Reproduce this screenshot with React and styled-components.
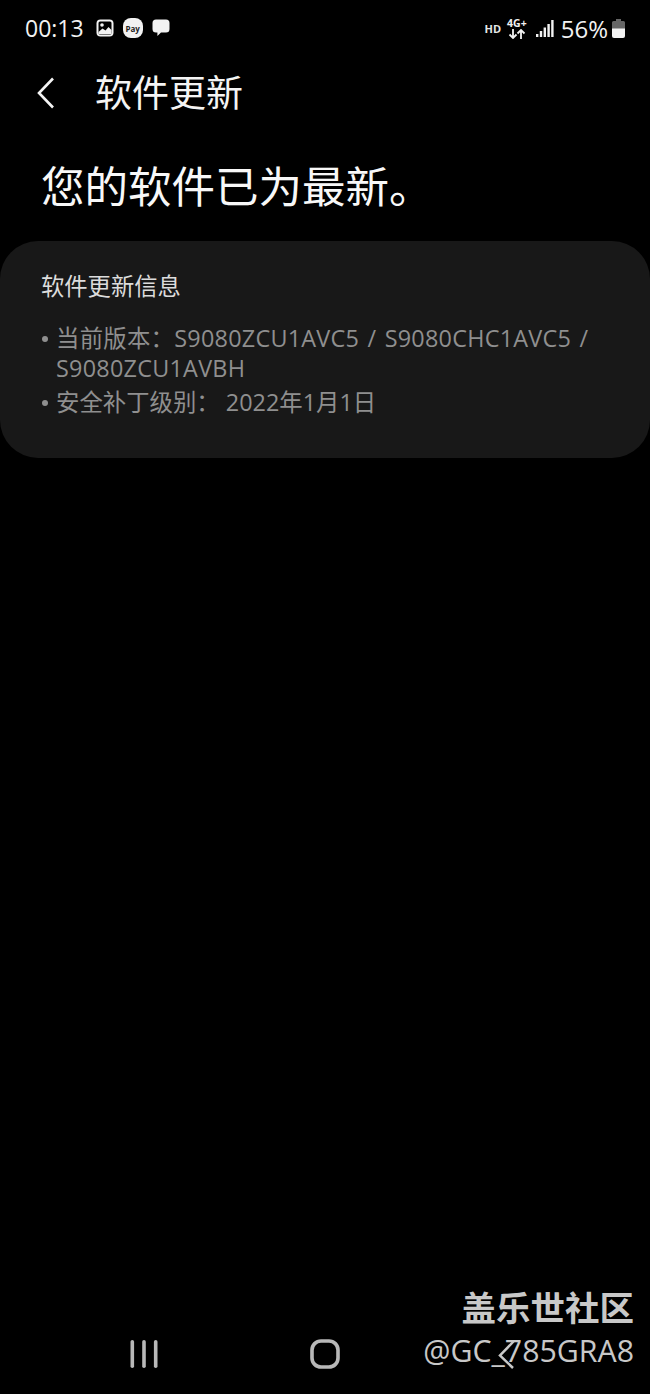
import styled, { createGlobalStyle } from "styled-components";

const latin = `"Open Sans", "Noto Sans CJK SC", sans-serif`;

export default function App() {
  return (
    <>
      <GlobalStyle />
      <Page>
        <StatusBar>
          <StatusGroup>
            <Clock>00:13</Clock>
            <GalleryIcon />
            <PayBadge>Pay</PayBadge>
            <ChatIcon />
          </StatusGroup>
          <StatusGroup>
            <HdLabel>HD</HdLabel>
            <NetworkType>
              <span>4G+</span>
              <DataArrows />
            </NetworkType>
            <SignalIcon />
            <Battery>56%</Battery>
            <BatteryIcon />
          </StatusGroup>
        </StatusBar>

        <AppBar>
          <BackIcon />
          <AppTitle>软件更新</AppTitle>
        </AppBar>

        <Heading>您的软件已为最新。</Heading>

        <InfoCard>
          <CardTitle>软件更新信息</CardTitle>
          <InfoList>
            <InfoItem $wordGap={2} $track={0.25}>当前版本：S9080ZCU1AVC5 / S9080CHC1AVC5 / S9080ZCU1AVBH</InfoItem>
            <InfoItem>安全补丁级别：&nbsp;2022年1月1日</InfoItem>
          </InfoList>
        </InfoCard>

        <NavBar>
          <RecentsIcon />
          <HomeIcon />
        </NavBar>

        <Watermark>
          <WatermarkName>盖乐世社区</WatermarkName>
          <WatermarkUser>@GC_785GRA8</WatermarkUser>
          <NavBackIcon />
        </Watermark>
      </Page>
    </>
  );
}

function GalleryIcon() {
  return (
    <svg width="18" height="18" viewBox="0 0 18 18">
      <rect x="0.5" y="0.5" width="17" height="17" rx="4" fill="#f2f2f2" />
      <rect x="2.5" y="2.5" width="13" height="13" rx="1.5" fill="#000" />
      <circle cx="6" cy="6" r="1.8" fill="#f2f2f2" />
      <path d="M2.5 13l4-3.5 3 2 3-3.5 3 3v4h-13z" fill="#f2f2f2" />
    </svg>
  );
}

function ChatIcon() {
  return (
    <svg width="18" height="18" viewBox="0 0 18 18">
      <path
        d="M4 0.5h10a3.5 3.5 0 0 1 3.5 3.5v6a3.5 3.5 0 0 1-3.5 3.5h-5l-3.6 3.6v-3.6h-1.4a3.5 3.5 0 0 1-3.5-3.5v-6a3.5 3.5 0 0 1 3.5-3.5z"
        fill="#f2f2f2"
      />
    </svg>
  );
}

function DataArrows() {
  return (
    <svg width="18" height="10" viewBox="0 0 18 10">
      <path d="M5 0v9M1.5 5.5L5 9l3.5-3.5" stroke="#f2f2f2" strokeWidth="1.8" fill="none" />
      <path d="M13 10V1M9.5 4.5L13 1l3.5 3.5" stroke="#f2f2f2" strokeWidth="1.8" fill="none" />
    </svg>
  );
}

function SignalIcon() {
  return (
    <svg width="18" height="17" viewBox="0 0 18 17">
      <rect x="0" y="14" width="2.4" height="3" fill="#f2f2f2" />
      <rect x="3.8" y="11" width="2.4" height="6" fill="#f2f2f2" />
      <rect x="7.6" y="7.5" width="2.4" height="9.5" fill="#f2f2f2" />
      <rect x="11.4" y="4" width="2.4" height="13" fill="#f2f2f2" />
      <rect x="15.2" y="0" width="2.4" height="17" fill="#f2f2f2" />
    </svg>
  );
}

function BatteryIcon() {
  return (
    <svg width="13" height="19" viewBox="0 0 13 19">
      <path d="M4 0h5v2h2.5a1.5 1.5 0 0 1 1.5 1.5V10H0V3.5A1.5 1.5 0 0 1 1.5 2H4z" fill="#666" />
      <path d="M0 9.5h13v7.5a2 2 0 0 1-2 2H2a2 2 0 0 1-2-2z" fill="#f2f2f2" />
    </svg>
  );
}

function BackIcon() {
  return (
    <svg width="18" height="32" viewBox="0 0 18 32">
      <path d="M16 1.5L2 16l14 14.5" stroke="#f4f4f4" strokeWidth="2.6" fill="none" />
    </svg>
  );
}

function RecentsIcon() {
  return (
    <svg width="28" height="28" viewBox="0 0 28 28">
      <rect x="0.5" y="0" width="3.6" height="28" rx="1.8" fill="#b8b8b8" />
      <rect x="12.2" y="0" width="3.6" height="28" rx="1.8" fill="#b8b8b8" />
      <rect x="23.9" y="0" width="3.6" height="28" rx="1.8" fill="#b8b8b8" />
    </svg>
  );
}

function HomeIcon() {
  return (
    <svg width="30" height="30" viewBox="0 0 30 30">
      <rect x="2" y="2" width="26" height="26" rx="9" stroke="#b8b8b8" strokeWidth="3.6" fill="none" />
    </svg>
  );
}

function NavBackIcon() {
  return (
    <NavBackSvg width="18" height="30" viewBox="0 0 18 30">
      <path d="M16 1L2 15.5 15 28" stroke="#c8c8c8" strokeWidth="2.5" fill="none" />
    </NavBackSvg>
  );
}

const GlobalStyle = createGlobalStyle`
  * {
    margin: 0;
    padding: 0;
    box-sizing: border-box;
  }

  html, body {
    background-color: #000;
  }

  ul {
    list-style: none;
  }
`;

const Page = styled.div`
  position: relative;
  width: 650px;
  height: 1394px;
  display: flex;
  flex-direction: column;
  background-color: #000;
  font-family: ${latin};
  overflow: hidden;
`;

const StatusBar = styled.div`
  height: 56px;
  padding: 0 25px;
  display: flex;
  align-items: center;
  justify-content: space-between;
  color: #f2f2f2;
`;

const StatusGroup = styled.div`
  display: flex;
  align-items: center;
  gap: 9px;
`;

const Clock = styled.span`
  font-size: 23px;
  margin-right: 3px;
`;

const PayBadge = styled.span`
  width: 20px;
  height: 20px;
  border-radius: 8px;
  background: #f2f2f2;
  color: #222;
  font-size: 8px;
  font-weight: 700;
  display: flex;
  align-items: center;
  justify-content: center;
`;

const HdLabel = styled.span`
  font-size: 11px;
  font-weight: 700;
  color: #e6e6e6;
  margin-right: -3px;
`;

const NetworkType = styled.span`
  display: flex;
  flex-direction: column;
  align-items: center;
  font-size: 10.5px;
  font-weight: 700;
  line-height: 11px;
`;

const Battery = styled.span`
  font-size: 24px;
  margin-left: -2px;
  margin-right: -5px;
`;

const AppBar = styled.header`
  height: 74px;
  padding-left: 37px;
  display: flex;
  align-items: center;
  gap: 40px;
`;

const AppTitle = styled.h1`
  font-family: "Noto Sans CJK SC", sans-serif;
  font-size: 37px;
  line-height: 48px;
  margin-top: -4px;
  font-weight: 400;
  color: #f4f4f4;
`;

const Heading = styled.h2`
  padding: 23px 0 0 41px;
  height: 111px;
  font-family: "Noto Sans CJK SC", sans-serif;
  font-size: 43.5px;
  line-height: 64px;
  font-weight: 400;
  color: #f8f8f8;
`;

const InfoCard = styled.section`
  height: 217px;
  padding: 26px 41px 0;
  border-radius: 38px;
  background-color: #181818;
`;

const CardTitle = styled.h3`
  font-family: "Noto Sans CJK SC", sans-serif;
  font-size: 23.3px;
  line-height: 36px;
  font-weight: 400;
  color: #dcdcdc;
`;

const InfoList = styled.ul`
  margin-top: 20px;
  display: flex;
  flex-direction: column;
  gap: 4px;
`;

const InfoItem = styled.li`
  position: relative;
  padding-left: 15px;
  font-size: 23.4px;
  line-height: 30px;
  word-spacing: ${(props) => props.$wordGap || 0}px;
  letter-spacing: ${(props) => props.$track || 0}px;
  color: #8f8f8f;

  &::before {
    content: "";
    position: absolute;
    left: 1px;
    top: 13px;
    width: 6px;
    height: 6px;
    border-radius: 50%;
    background: #8f8f8f;
  }
`;

const NavBar = styled.nav`
  margin-top: auto;
  height: 80px;
  padding-left: 130px;
  display: flex;
  align-items: center;
  gap: 152px;
`;

const Watermark = styled.div`
  position: absolute;
  right: 16px;
  bottom: 20px;
  text-align: right;
  color: #c8c8c8;
`;

const WatermarkName = styled.div`
  font-family: "Noto Sans CJK SC", sans-serif;
  font-size: 34.5px;
  line-height: 46px;
  margin-bottom: -1px;
  font-weight: 700;
`;

const WatermarkUser = styled.div`
  font-size: 30.3px;
  line-height: 46px;
`;

const NavBackSvg = styled.svg`
  position: absolute;
  left: 75px;
  bottom: 4px;
`;
